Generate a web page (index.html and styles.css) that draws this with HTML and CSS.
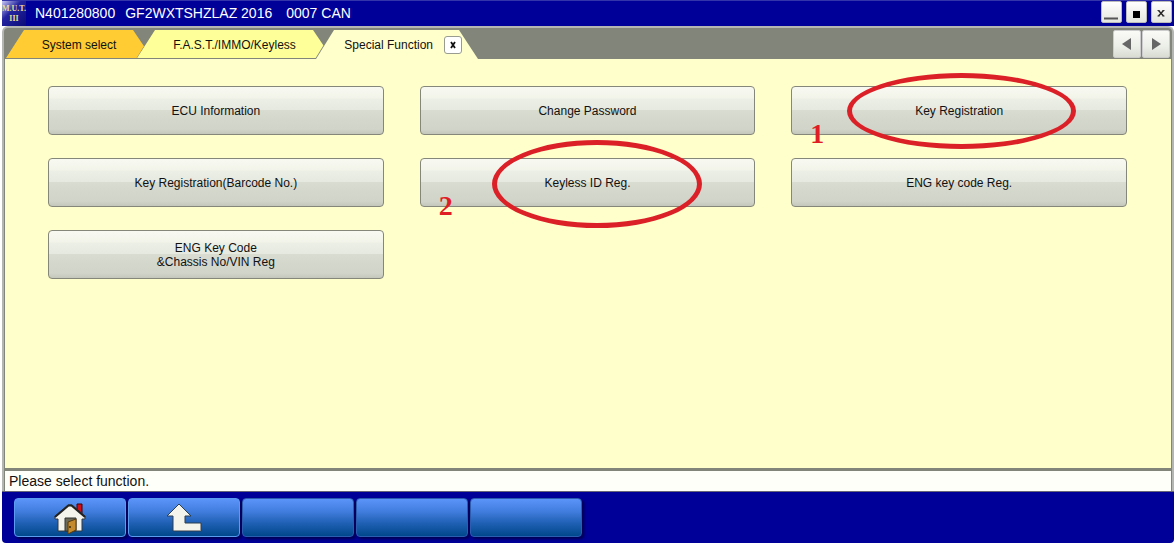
FILE: index.html
```html
<!DOCTYPE html>
<html lang="en">
<head>
    <meta charset="UTF-8">
    <meta name="viewport" content="width=device-width, initial-scale=1.0">
    <title>M.U.T. III - Special Function</title>
    <link rel="stylesheet" href="styles.css">
</head>
<body>

<header class="titlebar">
    <div class="logo"><span>M.U.T.</span><span>III</span></div>
    <div class="vehicle">
        <span>N401280800</span>
        <span>GF2WXTSHZLAZ 2016</span>
        <span class="can">0007 CAN</span>
    </div>
    <div class="window-buttons">
        <button aria-label="Minimize"><svg width="18" height="18"><path d="M2 15.500h14" stroke="#555" stroke-width="2"/></svg></button>
        <button aria-label="Maximize"><svg width="18" height="18"><rect x="6" y="8" width="7" height="7" fill="#000"/></svg></button>
        <button aria-label="Close"><svg width="18" height="18"><path d="M6.500 7.500l5 5.500M11.500 7.500l-5 5.500" stroke="#222" stroke-width="1.400"/><path d="M5.500 7.500h2M10.500 7.500h2M5.500 13h2M10.500 13h2" stroke="#333"/></svg></button>
    </div>
</header>

<div class="frame">
    <nav class="tabs">
        <button class="tab system">System select</button>
        <button class="tab immo">F.A.S.T./IMMO/Keyless</button>
        <div class="tab special">
            <span>Special Function</span>
            <button class="tab-close" aria-label="Close tab"><svg width="16" height="16"><path d="M6 5l4 6M10 5l-4 6" stroke="#111" stroke-width="1.800"/></svg></button>
        </div>
        <div class="tab-scroll">
            <button aria-label="Previous tab"><svg width="26" height="26"><path d="M8 13l9-6v12z" fill="#666"/></svg></button>
            <button aria-label="Next tab"><svg width="26" height="26"><path d="M18 13l-9-6v12z" fill="#666"/></svg></button>
        </div>
    </nav>

    <main class="functions">
        <button class="function">ECU Information</button>
        <button class="function">Change Password</button>
        <button class="function">Key Registration
            <span class="ring ring-key"></span>
            <span class="step">1</span>
        </button>
        <button class="function">Key Registration(Barcode No.)</button>
        <button class="function">Keyless ID Reg.
            <span class="ring ring-keyless"></span>
            <span class="step">2</span>
        </button>
        <button class="function">ENG key code Reg.</button>
        <button class="function">ENG Key Code<br>&amp;Chassis No/VIN Reg</button>
    </main>

    <div class="status">Please select function.</div>
</div>

<footer class="toolbar">
    <button class="tool lit" aria-label="Home">
        <svg width="34" height="32" viewBox="0 0 34 32">
            <path d="M24 2h5v10h-5z" fill="#d01018" stroke="#400"/>
            <path d="M2 14L15 3h4l13 11v3h-3v12H5V17H2z" fill="#f4f4ec" stroke="#33383c"/>
            <path d="M2 15L15.500 3.500h3L32 15" fill="none" stroke="#222" stroke-width="2"/>
            <path d="M12 29V16h11v13z" fill="#6b6a58" stroke="#333"/>
            <path d="M15 20l8-3v11l-8 4z" fill="#c48a2c" stroke="#5b3a08"/>
            <circle cx="17" cy="25" r="1" fill="#402800"/>
        </svg>
    </button>
    <button class="tool lit" aria-label="Back">
        <svg width="38" height="32" viewBox="0 0 38 32">
            <path d="M14 2L2 14h6v15h28v-8H20v-7h6z" fill="#f4f4ec" stroke="#2c3f50"/>
            <path d="M9 28.500h26.500V22" fill="none" stroke="#999"/>
        </svg>
    </button>
    <button class="tool" disabled aria-label="Empty"></button>
    <button class="tool" disabled aria-label="Empty"></button>
    <button class="tool" disabled aria-label="Empty"></button>
</footer>

</body>
</html>
```

FILE: styles.css
```css
* {
    box-sizing: border-box;
}
body {
    margin: 0;
    padding: 0 1px 1px 2px;
    min-height: 100vh;
    display: flex;
    flex-direction: column;
    background: #fff;
    color: #111;
    font-family: "Liberation Sans", Arial, sans-serif;
    font-size: 12px;
}
button {
    padding: 0;
    font: inherit;
    color: inherit;
    cursor: pointer;
}
svg {
    display: block;
}

/* title bar */
.titlebar {
    display: flex;
    align-items: flex-start;
    height: 26px;
    padding-right: 2px;
    background: #000099;
    border-top: 1px solid #33a;
    color: #fff;
    font-size: 14px;
}
.logo {
    display: flex;
    flex-direction: column;
    align-items: center;
    justify-content: center;
    width: 24px;
    height: 25px;
    background: linear-gradient(135deg, #c8c8f4, #2424a0 40%, #0b0b78);
    color: #e8dc90;
    font: bold 8px/10px "Liberation Serif", serif;
}
.vehicle {
    display: flex;
    flex: 1;
    gap: 10px;
    padding-left: 9px;
    line-height: 24px;
}
.can {
    padding-left: 4px;
}
.window-buttons {
    display: flex;
    gap: 4px;
}
.window-buttons button {
    width: 21px;
    height: 22px;
    border: 1px solid #bbb;
    border-radius: 2px;
    background: linear-gradient(#fff, #e4e6e0);
}

/* tabs */
.frame {
    flex: 1;
    display: flex;
    flex-direction: column;
    border: 2px solid #b4b6b4;
    border-bottom: 0;
    border-radius: 6px 6px 0 0;
    background: #82867a;
    padding: 1px 1px 0;
}
.tabs {
    display: flex;
    height: 30px;
    padding-top: 1px;
}
.tab {
    position: relative;
    display: flex;
    align-items: center;
    justify-content: center;
    height: 29px;
    border: 0;
    background: #82867a;
    clip-path: polygon(18px 0, calc(100% - 19px) 0, 100% 100%, 0 100%);
    isolation: isolate;
}
.tab::before {
    content: "";
    position: absolute;
    inset: 0 1px 1px;
    z-index: -1;
    background: #ffcc33;
    clip-path: polygon(18px 0, calc(100% - 19px) 0, 100% 100%, 0 100%);
}
.system {
    width: 148px;
}
.immo {
    width: 197px;
    margin-left: -17px;
}
.immo::before {
    background: #ffff99;
}
.special {
    justify-content: flex-end;
    width: 164px;
    margin-left: -18px;
    padding-right: 17px;
    gap: 11px;
}
.special::before {
    bottom: 0;
    background: #ffffcc;
}
.tab-close {
    width: 18px;
    height: 18px;
    border: 1px solid #999c90;
    border-radius: 3px;
    background: #fff;
}
.tab-scroll {
    display: flex;
    gap: 1px;
    margin: 0 1px 0 auto;
}
.tab-scroll button {
    width: 28px;
    height: 28px;
    border: 1px solid #ccc;
    border-radius: 2px;
    background: linear-gradient(#fafaf6, #eceee8 60%, #d8dcd2);
}

/* function buttons */
.functions {
    flex: 1;
    display: grid;
    grid-template-columns: repeat(3, 1fr);
    grid-auto-rows: 49px;
    align-content: start;
    gap: 23px 36px;
    padding: 27px 44px 27px 43px;
    background: #ffffcc;
}
.function {
    position: relative;
    border: 1px solid #85877a;
    border-radius: 4px;
    background: linear-gradient(#f8faf2, #f2f4ea 24%, #ecefe5 25%, #e6e9df 49%, #d9dcd1 50%, #d3d7cc 70%, #d0d4c9 90%, #c4c8bc);
    line-height: 14px;
}
.ring {
    position: absolute;
    border: 5px solid #dc2028;
    border-radius: 50%;
}
.ring-key {
    left: 55px;
    top: -14px;
    width: 229px;
    height: 76px;
}
.ring-keyless {
    left: 71px;
    top: -19px;
    width: 210px;
    height: 88px;
}
.step {
    position: absolute;
    left: 18px;
    top: 31px;
    color: #e01c24;
    font: bold 28px/32px "Liberation Serif", serif;
}

.status {
    margin-top: 3px;
    height: 20px;
    padding-left: 4px;
    background: #fffffa;
    font-size: 14px;
    line-height: 20px;
}

/* bottom toolbar */
.toolbar {
    display: flex;
    gap: 2px;
    height: 52px;
    padding: 6px 12px;
    background: #000099;
    border-top: 1px solid #667;
    border-radius: 0 0 4px 4px;
}
.tool {
    display: flex;
    align-items: center;
    justify-content: center;
    width: 112px;
    height: 39px;
    border: 1px solid #2a5cb0;
    border-radius: 4px;
    background: linear-gradient(#5c94fa, #3f7cdc 35%, #2060b4 65%, #00488c);
    box-shadow: 2px 2px 3px #000050;
}
.lit {
    border-color: #5a9cf0;
}
```
